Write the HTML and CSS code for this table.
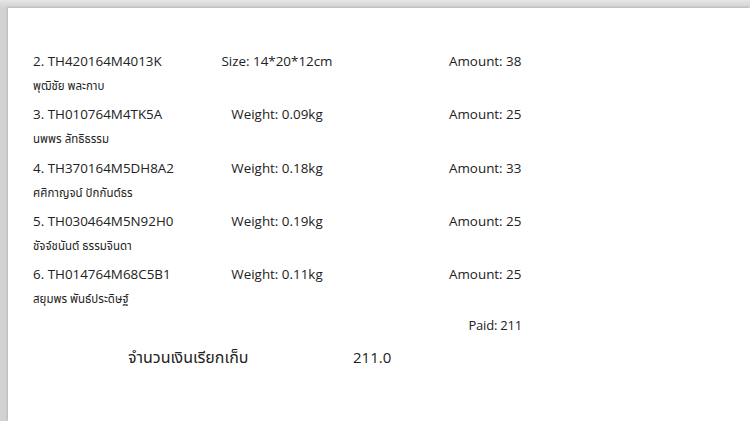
FILE: index.html
```html
<!DOCTYPE html>
<html lang="th">
<head>
<meta charset="utf-8">
<link rel="stylesheet" href="styles.css">
</head>
<body>
<div class="page">
  <div class="rows">
    <div class="row">
      <div class="id">2. TH420164M4013K</div>
      <div class="mid">Size: 14*20*12cm</div>
      <div class="amt">Amount: 38</div>
      <div class="name">พุฒิชัย พละกาบ</div>
    </div>
    <div class="row">
      <div class="id">3. TH010764M4TK5A</div>
      <div class="mid">Weight: 0.09kg</div>
      <div class="amt">Amount: 25</div>
      <div class="name">นพพร ลัทธิธรรม</div>
    </div>
    <div class="row">
      <div class="id">4. TH370164M5DH8A2</div>
      <div class="mid">Weight: 0.18kg</div>
      <div class="amt">Amount: 33</div>
      <div class="name">ศศิกาญจน์ ปักกันต์ธร</div>
    </div>
    <div class="row">
      <div class="id">5. TH030464M5N92H0</div>
      <div class="mid">Weight: 0.19kg</div>
      <div class="amt">Amount: 25</div>
      <div class="name">ชัจจ์ชนันต์ ธรรมจินดา</div>
    </div>
    <div class="row">
      <div class="id">6. TH014764M68C5B1</div>
      <div class="mid">Weight: 0.11kg</div>
      <div class="amt">Amount: 25</div>
      <div class="name">สยุมพร พันธ์ประดิษฐ์</div>
    </div>
  </div>
  <div class="paid">Paid: 211</div>
  <div class="total">
    <span class="total-label">จำนวนเงินเรียกเก็บ</span>
    <span class="total-value">211.0</span>
  </div>
</div>
</body>
</html>
```
FILE: styles.css
```css
html, body {
  margin: 0;
  padding: 0;
  height: 100%;
  overflow: hidden;
}
body {
  background: linear-gradient(180deg, #e6e6e6 0px, #d2d2d2 8px);
  padding: 8px 0 0 8px;
  box-sizing: border-box;
  font-family: "Open Sans", "Noto Sans", "Noto Sans Thai", "Tahoma", sans-serif;
  color: #222;
}
.page {
  background: #fff;
  height: 100%;
  box-shadow: -1px -1px 2px rgba(0,0,0,0.12);
  padding: 44px 0 0 25px;
  box-sizing: border-box;
}
.rows {
  display: flex;
  flex-direction: column;
  gap: 10.25px;
}
.row {
  display: grid;
  grid-template-columns: 160px 168px 1fr;
  grid-template-rows: 18px 18px;
  row-gap: 7px;
  font-size: 13.4px;
  line-height: 18px;
}
.mid {
  text-align: center;
}
.amt {
  padding-left: 88px;
}
.name {
  grid-column: 1 / 4;
  font-size: 11.5px;
}
.paid {
  width: 489px;
  text-align: right;
  font-size: 13px;
  line-height: 18px;
  margin-top: 8px;
  letter-spacing: -0.2px;
}
.total {
  display: grid;
  grid-template-columns: 225px auto;
  padding-left: 95px;
  margin-top: 13px;
  font-size: 15px;
  line-height: 20px;
}
.total-label {
  font-size: 16px;
}
```
